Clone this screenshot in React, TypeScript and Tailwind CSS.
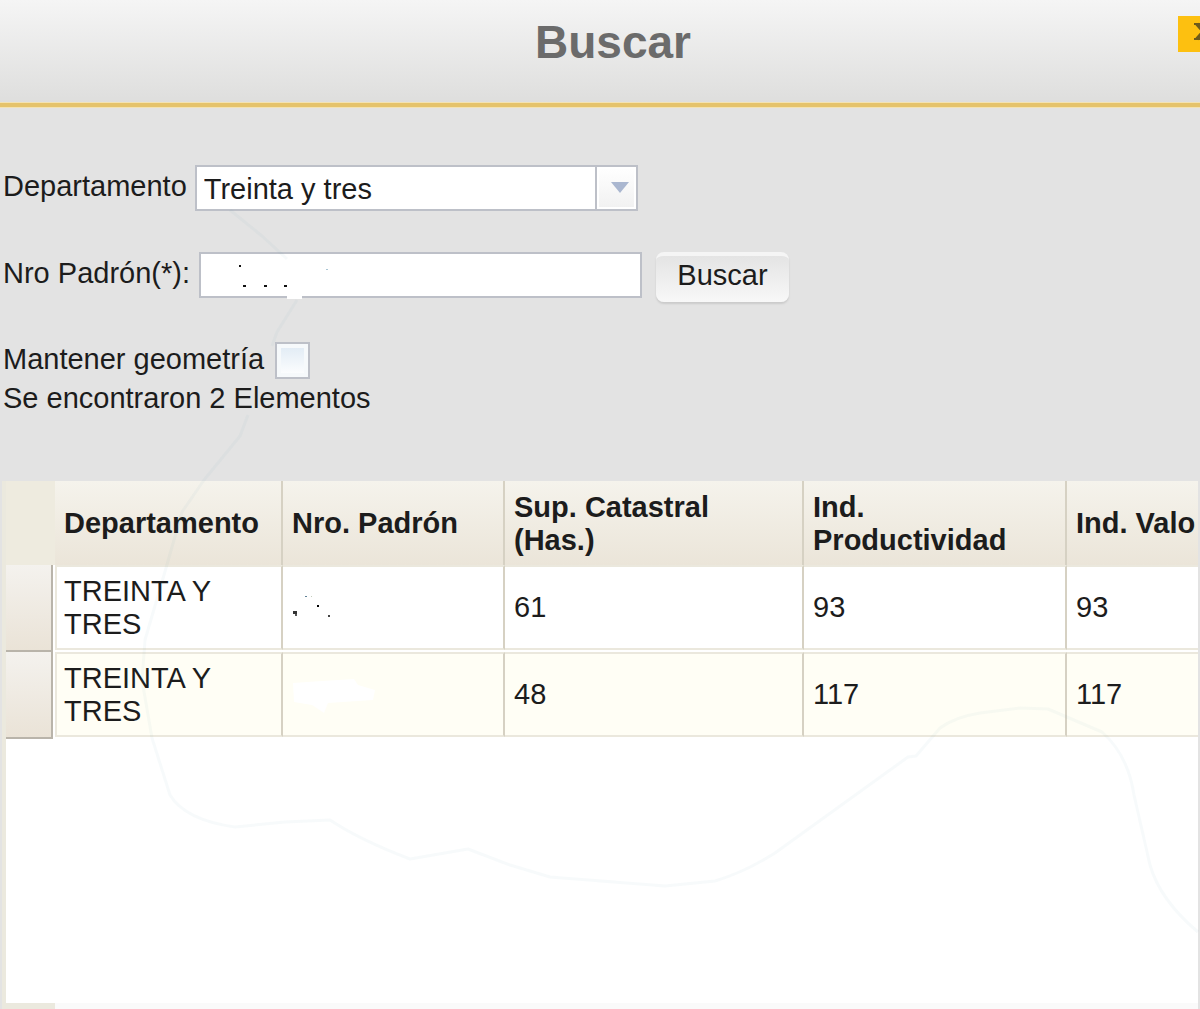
import React, { useState } from 'react';

const columns = ['Departamento', 'Nro. Padrón', 'Sup. Catastral (Has.)', 'Ind. Productividad', 'Ind. Valo'];

const rows = [
  { depto: 'TREINTA Y TRES', sup: '61', prod: '93', valor: '93' },
  { depto: 'TREINTA Y TRES', sup: '48', prod: '117', valor: '117' },
];

// faint river line that shows through the panel
const MapTrace: React.FC = () => (
  <svg
    className="absolute left-0 top-0 pointer-events-none"
    width="1200"
    height="1009"
    viewBox="0 0 1200 1009"
    fill="none"
    aria-hidden="true"
  >
    <path
      d="M230 210L262 236L287 259M297 300L277 332L272 346M248 415L240 436L204 480L182 512L164 575L145 640L142 680L152 738L170 795Q185 820 235 827L285 822L330 820Q360 840 410 859L468 849L510 865L550 877L665 886L715 881Q745 872 775 853L908 757L916 756L940 728Q955 717 980 713L1020 708L1048 709L1102 732Q1128 755 1134 795L1150 865Q1160 900 1198 932"
      stroke="#5d9fb6"
      strokeOpacity="0.05"
      strokeWidth="3"
      strokeLinejoin="round"
    />
  </svg>
);

const PadronMarks: React.FC = () => (
  <svg width="44" height="26" viewBox="0 0 44 26" aria-hidden="true">
    <rect x="1" y="16" width="4" height="3" fill="#333" />
    <rect x="3" y="19" width="2" height="2" fill="#555" />
    <rect x="13" y="1" width="2" height="1" fill="#5f8196" />
    <rect x="19" y="1" width="1" height="1" fill="#c4cdbd" />
    <rect x="25" y="10" width="2" height="2" fill="#000" />
    <rect x="36" y="20" width="2" height="2" fill="#444" />
  </svg>
);

const ErasedMark: React.FC = () => (
  <svg width="86" height="40" viewBox="0 0 86 40" aria-hidden="true">
    <path d="M1 8L30 6L62 4L66 10L83 15L81 25L36 28L32 38L20 30L2 27Z" fill="#fff" />
  </svg>
);

const App: React.FC = () => {
  const [departamento, setDepartamento] = useState('Treinta y tres');
  const [padron, setPadron] = useState('');
  const [mantener, setMantener] = useState(false);

  return (
    <div className="relative min-h-screen flex flex-col overflow-hidden bg-[#e3e3e3] text-[#1c1c1c] text-[29px] leading-[33px] font-['Liberation_Sans',Arial,sans-serif]">
      <header className="relative flex justify-center h-[107px] pt-4 pl-[26px] bg-linear-to-b from-[#f5f5f5] to-[#dededd] border-b-4 border-[#e5c36c] shadow-[0_1px_0_#f3e3b4,inset_0_-1px_0_#f3e3b4]">
        <h1 className="text-[46px] leading-[52px] font-bold text-[#6b6b6b]">Buscar</h1>
        <button
          type="button"
          aria-label="Cerrar"
          className="absolute top-4 -right-[30px] w-[52px] h-9 flex justify-center pt-[6px] bg-[#fdc010] text-[#6d5a1c]"
        >
          <svg width="20" height="20" viewBox="0 0 20 20" aria-hidden="true">
            <path d="M3 2L17 17M17 2L3 17" stroke="currentColor" strokeWidth="4" />
            <path d="M0 2H7M13 2H20M0 17H7M13 17H20" stroke="currentColor" strokeWidth="2" />
          </svg>
        </button>
      </header>

      <form className="flex flex-col pt-[58px] pl-[3px]" onSubmit={(e) => e.preventDefault()}>
        <div className="flex items-center gap-2">
          <label htmlFor="departamento" className="pb-1">Departamento</label>
          <div className="relative w-[443px] h-[46px]">
            <select
              id="departamento"
              value={departamento}
              onChange={(e) => setDepartamento(e.target.value)}
              className="appearance-none w-full h-full pl-[7px] pt-[2px] bg-white border-2 border-[#bdc0c8]"
            >
              <option>Treinta y tres</option>
            </select>
            <span className="absolute right-0 top-0 w-[43px] h-full flex items-center justify-center pl-2 border-2 border-[#bdc0c8] bg-linear-to-b from-white to-[#f1f1f1] outline-2 -outline-offset-4 outline-white pointer-events-none">
              <svg width="18" height="12" viewBox="0 0 18 12" aria-hidden="true">
                <path d="M0 0H18L9 11Z" fill="#aab7d0" />
              </svg>
            </span>
          </div>
        </div>

        <div className="flex items-start mt-[41px]">
          <label htmlFor="padron" className="pt-[5px]">Nro Padrón(*):</label>
          <div className="relative ml-[9px] w-[443px] h-[46px]">
            <input
              id="padron"
              type="text"
              value={padron}
              onChange={(e) => setPadron(e.target.value)}
              className="w-full h-full px-2 bg-white border-2 border-[#bdc0c8]"
            />
            <svg
              className="absolute left-8 top-3 pointer-events-none"
              width="104"
              height="36"
              viewBox="0 0 104 36"
              aria-hidden="true"
            >
              <rect x="8" y="1" width="2" height="2" fill="#111" />
              <rect x="12" y="21" width="3" height="2" fill="#111" />
              <rect x="33" y="21" width="3" height="2" fill="#111" />
              <rect x="53" y="21" width="3" height="2" fill="#111" />
              <rect x="95" y="5" width="2" height="1" fill="#a9c5d4" />
              <rect x="56" y="30" width="15" height="5" fill="#fff" />
            </svg>
          </div>
          <button
            type="submit"
            className="ml-[14px] w-[133px] h-[50px] pb-2 rounded-lg bg-linear-to-b from-[#e4e4e4] to-[#f8f8f8] border-t-4 border-[#f5f5f5] shadow-[0_2px_2px_#cbcbcb]"
          >
            Buscar
          </button>
        </div>

        <div className="flex items-start mt-10">
          <label htmlFor="mantener" className="pt-px">Mantener geometría</label>
          <input
            id="mantener"
            type="checkbox"
            checked={mantener}
            onChange={(e) => setMantener(e.target.checked)}
            className="appearance-none ml-[11px] w-[35px] h-[37px] border-2 border-[#bdc0c8] bg-linear-to-b from-[#dfeaf4] to-white outline-4 -outline-offset-6 outline-[#f6f9fb] checked:bg-[#aab7d0]"
          />
        </div>
        <p className="mt-[3px]">Se encontraron 2 Elementos</p>
      </form>

      <section className="flex-1 flex flex-col mt-[66px] ml-[2px] mr-[2px] border-l-4 border-[#ebe9de] bg-white">
        <table className="w-full table-fixed border-separate border-spacing-0 text-left">
          <colgroup>
            <col className="w-[49px]" />
            <col className="w-[228px]" />
            <col className="w-[222px]" />
            <col className="w-[299px]" />
            <col className="w-[263px]" />
            <col />
          </colgroup>
          <thead>
            <tr className="h-[84px]">
              <td className="p-0 bg-[#eeebdf]" />
              {columns.map((col, i) => (
                <th
                  key={col}
                  className={`p-0 pl-[9px] pt-px align-middle font-bold bg-linear-to-b from-[#f5f3ec] to-[#ebe5d9] ${
                    i < columns.length - 1 ? 'border-r-2 border-r-[#d6d1c3] pr-4' : 'whitespace-nowrap overflow-hidden'
                  }`}
                >
                  {col}
                </th>
              ))}
            </tr>
          </thead>
          <tbody>
            {rows.map((row, i) => {
              const cells = [
                row.depto,
                i === 0 ? <PadronMarks /> : <ErasedMark />,
                row.sup,
                row.prod,
                row.valor,
              ];
              return (
                <tr key={i} className="h-[87px]">
                  <td className="p-0 align-top">
                    <div className="w-[47px] h-[87px] bg-linear-to-b from-[#f4f2ee] to-[#eae3d7] border-r-2 border-b-2 border-[#b9b4aa]" />
                  </td>
                  {cells.map((cell, j) => (
                    <td key={j} className="p-0 align-top">
                      <div
                        className={`flex items-center h-[85px] border-y-2 border-y-[#ebe8dd] ${
                          i % 2 ? 'bg-[#fffef5]' : 'bg-white'
                        } ${j < cells.length - 1 ? 'border-r-2 border-r-[#d6d1c3]' : ''} ${
                          j === 0 ? 'border-l-2 border-l-[#ebe8dd] pl-[7px] pr-12' : 'pl-[9px]'
                        }`}
                      >
                        {cell}
                      </div>
                    </td>
                  ))}
                </tr>
              );
            })}
          </tbody>
        </table>
        <div className="flex-1" />
        <div className="flex h-[6px] bg-[#fafafa]">
          <div className="w-[49px] bg-[#ebe9de]" />
        </div>
      </section>

      <MapTrace />
    </div>
  );
};

export default App;
